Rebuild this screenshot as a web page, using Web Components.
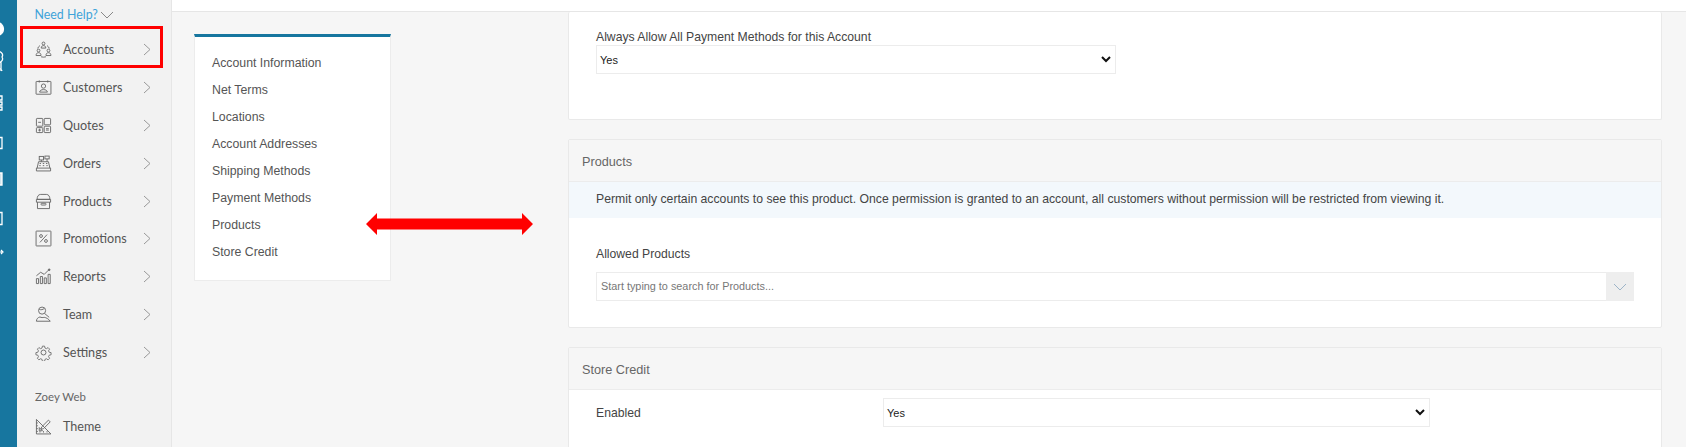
<!DOCTYPE html>
<html>
<head>
<meta charset="utf-8">
<title>Accounts</title>
<style>
html, body { margin: 0; height: 100%; overflow: hidden; }
body { font-family: "Liberation Sans", Arial, sans-serif; background: #f6f6f6; }
admin-shell { width: 1686px; height: 447px; }
</style>
</head>
<body>
<admin-shell>
  <side-menu slot="menu">
    <menu-item label="Accounts" icon="accounts" chevron></menu-item>
    <menu-item label="Customers" icon="customers" chevron></menu-item>
    <menu-item label="Quotes" icon="quotes" chevron></menu-item>
    <menu-item label="Orders" icon="orders" chevron></menu-item>
    <menu-item label="Products" icon="products" chevron></menu-item>
    <menu-item label="Promotions" icon="promotions" chevron></menu-item>
    <menu-item label="Reports" icon="reports" chevron></menu-item>
    <menu-item label="Team" icon="team" chevron></menu-item>
    <menu-item label="Settings" icon="settings" chevron></menu-item>
    <menu-item label="Theme" icon="theme" slot="web"></menu-item>
  </side-menu>
  <section-nav slot="nav"></section-nav>
  <div slot="main">
    <form-card plain style="height:108px">
      <div style="padding:17px 0 0 27px">
        <div style="font-size:12.2px;color:#444;line-height:16px">Always Allow All Payment Methods for this Account</div>
        <native-select width="520"></native-select>
      </div>
    </form-card>
    <form-card title="Products" style="height:189px;margin-top:19px">
      <div style="background:#f3f8fc;height:36px;line-height:34px;padding-left:27px;font-size:12.23px;color:#444">Permit only certain accounts to see this product. Once permission is granted to an account, all customers without permission will be restricted from viewing it.</div>
      <div style="padding:28px 27px 0 27px">
        <div style="font-size:12.2px;color:#444;line-height:16px">Allowed Products</div>
        <product-search style="margin-top:10px"></product-search>
      </div>
    </form-card>
    <form-card title="Store Credit" style="height:120px;margin-top:19px">
      <div style="display:flex;align-items:center;padding:8px 0 0 27px">
        <div style="width:287px;font-size:12.2px;color:#444">Enabled</div>
        <native-select width="547"></native-select>
      </div>
    </form-card>
  </div>
  <double-arrow slot="overlay"></double-arrow>
</admin-shell>

<script>
const ICONS = {
  accounts: '<circle cx="12" cy="3.5" r="2"/><path d="M8.8 10c0-2.200 1.300-3.500 3.200-3.500s3.200 1.300 3.200 3.500z"/><circle cx="5" cy="13.500" r="2"/><path d="M1.500 20.500c0-2.700 1.500-4 3.500-4s3.500 1.300 3.500 4z"/><circle cx="19" cy="13.500" r="2"/><path d="M15.500 20.500c0-2.700 1.500-4 3.500-4s3.500 1.300 3.500 4z"/><path d="M8.500 22.300c2.300.7 4.700.7 7 0M3.700 10.500c.6-1.500 1.700-3 3.300-4M20.300 10.500c-.6-1.500-1.700-3-3.300-4"/>',
  customers: '<rect x="1.500" y="3.500" width="21" height="18" rx=".5"/><path d="M6 2v3M18 2v3"/><circle cx="12" cy="10" r="3"/><path d="M6.500 18.500c.5-2.500 2.500-3.500 5.500-3.500s5 1 5.500 3.500z"/>',
  quotes: '<rect x="2" y="2" width="9" height="11" rx="1"/><rect x="13" y="2" width="9" height="9" rx="1"/><rect x="2" y="15" width="9" height="7" rx="1"/><rect x="13" y="13" width="9" height="9" rx="1"/><path d="M4.500 7.500h4M15.500 16.500h4M15.500 18.500h4M6.500 16.500v4M4.500 18.500h4"/>',
  orders: '<path d="M2 22.500h20v-4H2zM3 18.500l2-9h14l2 9"/><rect x="6" y="2" width="6" height="5"/><rect x="14" y="1.500" width="6" height="4"/><path d="M9 7v2.500M17 5.500v4M6.500 12h2M11 12h2M15.500 12h2M6 15h2M11 15h2M16 15h2"/>',
  products: '<path d="M3 9c0-4 1.500-7 5-7h8c3.500 0 5 3 5 7z"/><path d="M2 9h20v4H2zM3.500 13v9h17v-9"/><rect x="8.500" y="14.500" width="7" height="2.500" rx="1"/>',
  promotions: '<rect x="1.500" y="1.500" width="21" height="21" rx=".5"/><circle cx="8.500" cy="8.500" r="2"/><circle cx="15.500" cy="15.500" r="2"/><path d="M17 6.500 7 17.500"/>',
  reports: '<path d="M2 22v-7h3v7zM7.500 22v-10h3v10zM13 22v-8h3v8zM18.500 22V9h3v13z"/><path d="M2 11l6-5 5 3 6-6"/><circle cx="20" cy="2.500" r="1.200" fill="#666"/>',
  team: '<circle cx="10" cy="6.500" r="5"/><path d="M13.500 10.500l6.500 5.500M6 5c2.500.5 5 .3 7-1.500"/><path d="M2 21.500c0-3.500 2.500-5.500 5-6 2 1 4 1 6 .5 3 .5 6 2 8.500 5.500z"/>',
  settings: '<circle cx="12" cy="12" r="3.500"/><path d="M10.300 2h3.400l.6 3 2.300 1 2.600-1.700 2.400 2.400-1.700 2.600 1 2.300 3 .6v3.400l-3 .6-1 2.300 1.700 2.600-2.400 2.400-2.600-1.700-2.300 1-.6 3h-3.400l-.6-3-2.300-1-2.600 1.700-2.400-2.400 1.700-2.600-1-2.300-3-.6v-3.400l3-.6 1-2.300-1.700-2.600 2.400-2.400 2.600 1.700 2.300-1z" transform="translate(1.200 1.200) scale(.9)"/>',
  theme: '<path d="M2 2v20.500h20.500z"/><path d="M6 13.500v4.500h4.500zM2 7h2M2 11h2M2 15h2M2 19h2M7 20.500v-2M12 20.500v-2M17 20.500v-2"/><path d="M9.500 12.500 19 3l2.500 2.500-9.500 9.500-3.500 1z"/>'
};

class AdminShell extends HTMLElement {
  constructor() {
    super();
    this.attachShadow({ mode: 'open' });
    this.shadowRoot.innerHTML = `
      <style>
        :host { display: flex; position: relative; overflow: hidden; background: #f6f6f6; }
        .rail { width: 17px; flex: none; background: #17769f; position: relative; overflow: hidden; }
        .rail svg { display: block; }
        .menu { width: 154px; flex: none; background: #f2f2f2; border-right: 1px solid #e6e6e6; box-sizing: content-box; }
        .body { flex: 1; min-width: 0; display: flex; flex-direction: column; }
        .top { height: 11px; flex: none; background: #fff; border-bottom: 1px solid #e6e6e6; }
        .cols { flex: 1; display: flex; align-items: flex-start; padding: 22px 24px 0 22px; min-height: 0; }
        .nav { width: 197px; flex: none; }
        .main { width: 1094px; margin-left: 177px; margin-top: -22px; flex: none; }
      </style>
      <div class="rail">
        <svg width="17" height="447" viewBox="0 0 17 447" fill="none" stroke="#fff" stroke-width="1.300">
          <circle cx="-3" cy="29" r="6.500" fill="#fff"/>
          <path d="M-4 57a3.500 3.500 0 1 0 6 0a3.500 3.500 0 1 0-6 0M-4 71c1-3 5-3 6 0M1 62v9"/>
          <path d="M-2 96h4v4h-4zM-2 102h4v3h-4zM-2 107h4v3h-4z"/>
          <path d="M-3 137.500h5v11h-5z"/>
          <path d="M-3 173h5v12h-5z" fill="#cfe3ec"/>
          <path d="M-3 212.500h5v12h-5z"/>
          <path d="M-2 252h4M1 250l2 2-2 2" stroke-width="1.200"/>
        </svg>
      </div>
      <div class="menu"><slot name="menu"></slot></div>
      <div class="body">
        <div class="top"></div>
        <div class="cols">
          <div class="nav"><slot name="nav"></slot></div>
          <div class="main"><slot name="main"></slot></div>
        </div>
      </div>
      <slot name="overlay"></slot>`;
  }
}

class SideMenu extends HTMLElement {
  constructor() {
    super();
    this.attachShadow({ mode: 'open' });
    this.shadowRoot.innerHTML = `
      <style>
        :host { display: block; font-family: Lato, "Open Sans", sans-serif; padding-top: 7px; }
        .help { color: #3ea3d9; font-size: 12.400px; line-height: 16px; padding-left: 17.500px; display: flex; align-items: center; gap: 2px; }
        .box { position: absolute; left: 20px; top: 26px; width: 143px; height: 42px; border: 3px solid #f00; box-sizing: border-box; }
        .list { margin-top: 8px; }
        .group { color: #666; font-size: 11.400px; line-height: 16px; padding: 18px 0 0 18px; height: 18px; box-sizing: content-box; }
      </style>
      <div class="help">Need Help?
        <svg width="14" height="8" viewBox="0 0 14 8" fill="none" stroke="#888" stroke-width="1"><path d="M1 1l6 6 6-6"/></svg>
      </div>
      <div class="list"><slot></slot></div>
      <div class="group">Zoey Web</div>
      <slot name="web"></slot>
      <div class="box"></div>`;
  }
}

class MenuItem extends HTMLElement {
  constructor() {
    super();
    this.attachShadow({ mode: 'open' });
  }
  connectedCallback() {
    const icon = ICONS[this.getAttribute('icon')] || '';
    const chev = this.hasAttribute('chevron')
      ? '<svg class="chev" width="8" height="13" viewBox="0 0 8 13" fill="none" stroke="#999" stroke-width="1"><path d="M1 1l6 5.500-6 5.500"/></svg>'
      : '';
    this.shadowRoot.innerHTML = `
      <style>
        :host { display: flex; align-items: center; height: 37.800px; padding-left: 18px; color: #555; font-size: 12.600px; }
        .ico { width: 17px; height: 17px; flex: none; }
        .label { margin-left: 11px; flex: 1; }
        .chev { margin-right: 20px; flex: none; }
      </style>
      <svg class="ico" viewBox="0 0 24 24" fill="none" stroke="#666" stroke-width="1.300">${icon}</svg>
      <span class="label">${this.getAttribute('label')}</span>
      ${chev}`;
  }
}

class SectionNav extends HTMLElement {
  constructor() {
    super();
    this.attachShadow({ mode: 'open' });
    const links = ['Account Information', 'Net Terms', 'Locations', 'Account Addresses', 'Shipping Methods', 'Payment Methods', 'Products', 'Store Credit'];
    this.shadowRoot.innerHTML = `
      <style>
        :host { display: block; background: #fff; border: 1px solid #ececec; border-top: 3px solid #17769f; height: 247px; box-sizing: border-box; padding-top: 13px; }
        a { display: block; height: 27px; line-height: 27px; padding-left: 17px; font-size: 12.300px; color: #555; }
      </style>
      ${links.map(l => `<a>${l}</a>`).join('')}`;
  }
}

class FormCard extends HTMLElement {
  constructor() {
    super();
    this.attachShadow({ mode: 'open' });
  }
  connectedCallback() {
    const title = this.getAttribute('title');
    this.removeAttribute('title');
    const head = title ? `<div class="head">${title}</div>` : '';
    this.shadowRoot.innerHTML = `
      <style>
        :host { display: block; background: #fff; border: 1px solid #e9e9e9; border-radius: 2px; box-sizing: border-box; overflow: hidden; }
        :host([plain]) { border-top: 0; }
        .head { height: 41px; line-height: 45px; padding-left: 13px; background: #f6f6f6; border-bottom: 1px solid #ececec; font-size: 12.700px; color: #666; box-sizing: content-box; }
      </style>
      ${head}<slot></slot>`;
  }
}

class NativeSelect extends HTMLElement {
  constructor() {
    super();
    this.attachShadow({ mode: 'open' });
  }
  connectedCallback() {
    this.shadowRoot.innerHTML = `
      <style>
        :host { display: block; width: ${this.getAttribute('width')}px; }
        .s { height: 29px; box-sizing: border-box; border: 1px solid #ececec; background: #fff; display: flex; align-items: center; padding: 0 4px 0 3px; font: 11px "Liberation Sans", Arial, sans-serif; color: #222; }
        .t { flex: 1; }
      </style>
      <div class="s"><span class="t">Yes</span>
        <svg width="10" height="7" viewBox="0 0 10 7" fill="none" stroke="#111" stroke-width="2"><path d="M1 1l4 4 4-4"/></svg>
      </div>`;
  }
}

class ProductSearch extends HTMLElement {
  constructor() {
    super();
    this.attachShadow({ mode: 'open' });
    this.shadowRoot.innerHTML = `
      <style>
        :host { display: flex; height: 29px; }
        .in { flex: 1; border: 1px solid #ececec; border-right: 0; box-sizing: border-box; padding-left: 4px; font-size: 10.850px; line-height: 27px; color: #777; }
        .btn { width: 28px; background: #eee; display: flex; align-items: center; justify-content: center; }
      </style>
      <div class="in">Start typing to search for Products...</div>
      <div class="btn"><svg width="14" height="8" viewBox="0 0 14 8" fill="none" stroke="#9db4c8" stroke-width="1"><path d="M1 1l6 6 6-6"/></svg></div>`;
  }
}

class DoubleArrow extends HTMLElement {
  constructor() {
    super();
    this.attachShadow({ mode: 'open' });
    this.shadowRoot.innerHTML = `
      <style>:host { position: absolute; left: 366px; top: 213px; width: 167px; height: 22px; display: block; }</style>
      <svg width="167" height="22" viewBox="0 0 167 22"><path fill="#f00" d="M0 11 11 0v5.500h145V0l11 11-11 11v-5.500H11V22z"/></svg>`;
  }
}

customElements.define('admin-shell', AdminShell);
customElements.define('side-menu', SideMenu);
customElements.define('menu-item', MenuItem);
customElements.define('section-nav', SectionNav);
customElements.define('form-card', FormCard);
customElements.define('native-select', NativeSelect);
customElements.define('product-search', ProductSearch);
customElements.define('double-arrow', DoubleArrow);
</script>
</body>
</html>
